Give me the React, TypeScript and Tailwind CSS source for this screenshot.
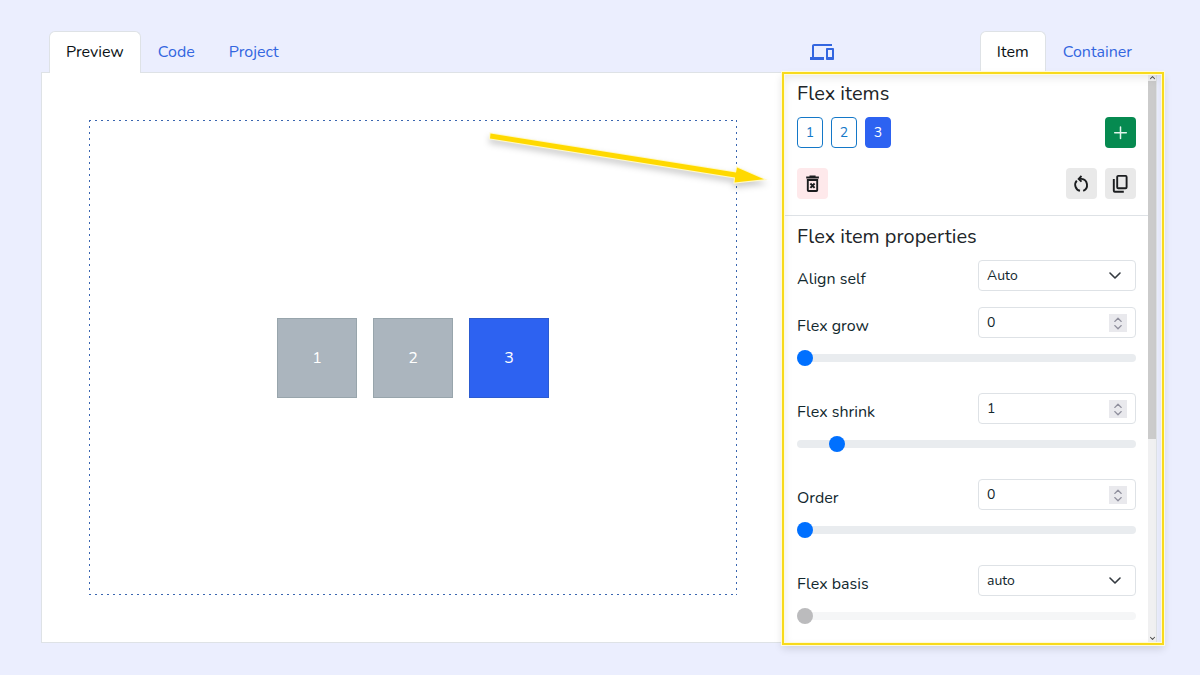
import { useId, useState } from 'react'
import type { ReactNode } from 'react'
import { MdDevices } from 'react-icons/md'
import clsx from 'clsx'

const items = [1, 2, 3]

function Tab({ label, active }: { label: string; active?: boolean }) {
  return (
    <a
      href="#"
      className={clsx(
        'block h-[42px] rounded-t-md border border-b-0 px-4 text-base leading-10',
        active ? 'border-[#dee2e6] bg-white text-[#0b1215]' : 'border-transparent text-[#3366e0]'
      )}
    >
      {label}
    </a>
  )
}

function Chevron({ className, up, stroke = 1.6 }: { className: string; up?: boolean; stroke?: number }) {
  return (
    <svg viewBox="0 0 12 8" className={className} fill="none" stroke="currentColor" strokeWidth={stroke} strokeLinecap="round" strokeLinejoin="round">
      <path d={up ? 'M1 7l5-5 5 5' : 'M1 1l5 5 5-5'} />
    </svg>
  )
}

function ActionIcon({ children }: { children: ReactNode }) {
  return (
    <svg viewBox="0 0 20 20" className="size-5" fill="none" stroke="currentColor" strokeWidth="1.9">
      {children}
    </svg>
  )
}

function SelectField({ label, options }: { label: string; options: string[] }) {
  const id = useId()
  return (
    <div className="flex items-end justify-between">
      <label htmlFor={id} className="leading-6">{label}</label>
      <div className="relative w-[158px]">
        <select id={id} className="block h-[31px] w-full appearance-none rounded border border-[#dee2e6] bg-white px-2 text-sm">
          {options.map((option) => (
            <option key={option}>{option}</option>
          ))}
        </select>
        <Chevron className="pointer-events-none absolute top-3 right-[15px] h-2 w-3 text-[#343a40]" />
      </div>
    </div>
  )
}

function Slider({ label, value, max, disabled, onChange }: { label: string; value: number; max: number; disabled?: boolean; onChange?: (value: number) => void }) {
  return (
    <input
      type="range"
      aria-label={label}
      min={0}
      max={max}
      value={value}
      disabled={disabled}
      onChange={(e) => onChange?.(Number(e.target.value))}
      className="mt-3 block h-4 w-full appearance-none bg-transparent [&::-webkit-slider-runnable-track]:h-2 [&::-webkit-slider-runnable-track]:rounded-full [&::-webkit-slider-runnable-track]:bg-[#e9ecef] [&::-webkit-slider-thumb]:-mt-1 [&::-webkit-slider-thumb]:size-4 [&::-webkit-slider-thumb]:appearance-none [&::-webkit-slider-thumb]:rounded-full [&::-webkit-slider-thumb]:bg-[#0070ff] disabled:[&::-webkit-slider-runnable-track]:bg-[#f5f6f7] disabled:[&::-webkit-slider-thumb]:bg-[#bbbbbd]"
    />
  )
}

function NumberField({ label, initial }: { label: string; initial: number }) {
  const id = useId()
  const [value, setValue] = useState(initial)

  return (
    <div className="mb-[27px]">
      <div className="flex items-end justify-between">
        <label htmlFor={id} className="leading-6">{label}</label>
        <div className="relative w-[158px]">
          <input
            id={id}
            type="number"
            value={value}
            onChange={(e) => setValue(Number(e.target.value))}
            className="block h-[31px] w-full rounded border border-[#dee2e6] bg-white px-2 text-sm [appearance:textfield] [&::-webkit-inner-spin-button]:appearance-none"
          />
          <span className="pointer-events-none absolute top-[7px] right-[9px] flex size-[18px] flex-col items-center justify-center gap-[3px] bg-[#e9e9ed] text-[#8f8f9d]">
            <Chevron up stroke={2.2} className="h-[5px] w-2" />
            <Chevron stroke={2.2} className="h-[5px] w-2" />
          </span>
        </div>
      </div>
      <Slider label={`${label} slider`} value={value} max={10} onChange={setValue} />
    </div>
  )
}

function Preview({ selected }: { selected: number }) {
  return (
    <section className="relative flex min-w-0 flex-1 border border-r-0 border-[#dee2e6] bg-white p-[47px]">
      {/* Sparse dotted outline: 2px dots every 6px along each edge */}
      <div className="flex flex-1 items-center justify-center gap-4 bg-[image:repeating-linear-gradient(90deg,#3a66b0_0_2px,transparent_2px_6px),repeating-linear-gradient(90deg,#3a66b0_0_2px,transparent_2px_6px),repeating-linear-gradient(180deg,#3a66b0_0_2px,transparent_2px_6px),repeating-linear-gradient(180deg,#3a66b0_0_2px,transparent_2px_6px)] [background-position:left_top,left_bottom,left_top,right_top] [background-size:100%_1px,100%_1px,1px_100%,1px_100%] bg-no-repeat">
        {items.map((n) => (
          <div
            key={n}
            className={clsx(
              'flex size-20 items-center justify-center border text-white',
              n === selected ? 'border-[#2c5bd0] bg-[#2d62f1]' : 'border-[#98a5ac] bg-[#abb5be]'
            )}
          >
            {n}
          </div>
        ))}
      </div>

      {/* Pointer to the settings panel */}
      <svg viewBox="0 0 300 80" className="pointer-events-none absolute top-[47px] right-1 h-20 w-[300px] drop-shadow-[0_4px_3px_rgba(0,0,0,0.2)]">
        <path
          d="M10.500 13.500L256 52.500L257 47.500L284 59.300L254.500 62.500L255 57.500L10 18.500Z"
          fill="#ffd900"
          stroke="#fff9c8"
          strokeWidth="2"
          paintOrder="stroke"
        />
      </svg>
    </section>
  )
}

function Settings({ selected, onSelect }: { selected: number; onSelect: (n: number) => void }) {
  return (
    <aside className="relative flex w-[373px] shrink-0 border border-[#dee2e6] bg-white">
      <div className="min-w-0 flex-1 overflow-hidden text-[#12282e]">
        <div className="border-b border-[#dee2e6] px-3 pt-2 pb-4">
          <h2 className="mb-[10px] text-xl leading-[26px] font-normal text-[#212529]">Flex items</h2>
          <div className="flex gap-2">
            {items.map((n) => (
              <button
                key={n}
                onClick={() => onSelect(n)}
                className={clsx(
                  'h-[31px] w-[26px] rounded border text-sm',
                  n === selected ? 'border-[#2d62f1] bg-[#2d62f1] text-white' : 'border-[#1478c8] bg-white text-[#1478c8]'
                )}
              >
                {n}
              </button>
            ))}
            <button aria-label="Add item" className="ml-auto flex size-[31px] items-center justify-center rounded bg-[#068a50] text-[#e4f5ec]">
              <svg viewBox="0 0 20 20" className="size-5" stroke="currentColor" strokeWidth="1.5" strokeLinecap="round">
                <path d="M9.500 4v11.500M3.700 9.700h11.600" />
              </svg>
            </button>
          </div>
          <div className="mt-5 flex gap-2 text-[#1b1d1f]">
            <button aria-label="Delete item" className="mr-auto flex size-[31px] items-center justify-center rounded bg-[#fee9eb]">
              <ActionIcon>
                <path d="M3.200 3.500H15.900M6.500 2.500H12.600" />
                <path d="M4.800 6H14.200V16.200a.8.8 0 0 1-.8.800H5.600a.8.8 0 0 1-.8-.8ZM7.400 9.500l4.200 4.300M11.600 9.500l-4.200 4.300" />
              </ActionIcon>
            </button>
            <button aria-label="Reset item" className="flex size-[31px] items-center justify-center rounded bg-[#e9e9e9]">
              <ActionIcon>
                <path d="M7.200 4.900h2.200A6.200 6.200 0 0 1 11.200 16.800M4.800 6.600A6.200 6.200 0 0 0 8 16.800" />
                <path d="M9.500 2L6.700 4.900l2.800 2.700" />
              </ActionIcon>
            </button>
            <button aria-label="Duplicate item" className="flex size-[31px] items-center justify-center rounded bg-[#e9e9e9]">
              <ActionIcon>
                <rect x="6.200" y="1.900" width="9.400" height="12.400" rx="1" />
                <path d="M2.800 5v11.700a1 1 0 0 0 1 1H12.800" />
              </ActionIcon>
            </button>
          </div>
        </div>

        <div className="px-3 pt-2">
          <h2 className="mb-[10px] text-xl leading-[26px] font-normal text-[#212529]">Flex item properties</h2>
          <div className="mb-4">
            <SelectField label="Align self" options={['Auto', 'Flex start', 'Flex end', 'Center', 'Baseline', 'Stretch']} />
          </div>
          <NumberField label="Flex grow" initial={0} />
          <NumberField label="Flex shrink" initial={1} />
          <NumberField label="Order" initial={0} />
          <SelectField label="Flex basis" options={['auto', 'px', '%', 'rem']} />
          <Slider label="Flex basis slider" value={0} max={100} disabled />
        </div>
      </div>

      {/* Scrollbar */}
      <div className="flex w-2 flex-col items-center bg-[#f0f0f1] pt-px text-[#505050]">
        <Chevron up stroke={2.5} className="my-px h-[5px] w-[5px]" />
        <div className="h-[63%] w-full bg-[#cbcbcb]" />
        <Chevron stroke={2.5} className="mt-auto mb-px h-[5px] w-[5px]" />
      </div>

      {/* Highlight frame */}
      <div className="pointer-events-none absolute -top-px -right-[8px] -bottom-[3px] -left-[3px] z-20 border-2 border-[#f8da1c] shadow-[0_0_0_1px_#fffbd8,0_4px_8px_rgba(0,0,0,0.12),inset_0_0_0_1px_#fffbd8,inset_0_4px_10px_rgba(0,0,0,0.09)]" />
    </aside>
  )
}

export default function App() {
  const [selected, setSelected] = useState(3)

  return (
    <main className="flex h-screen min-h-[675px] flex-col bg-[#ebeefe] pt-[31px] pr-[43px] pb-8 pl-[41px] font-['Nunito','Lato',sans-serif] text-base">
      <header className="relative z-10 -mb-px flex">
        <nav className="flex flex-1 items-start pl-2">
          <Tab label="Preview" active />
          <Tab label="Code" />
          <Tab label="Project" />
        </nav>
        <div className="flex w-[373px] shrink-0 items-start pr-2">
          <button aria-label="Toggle device preview" className="mt-[9px] ml-[26px] text-[#3366e0]">
            <MdDevices className="size-6" />
          </button>
          <nav className="ml-auto flex">
            <Tab label="Item" active />
            <Tab label="Container" />
          </nav>
        </div>
      </header>
      <div className="flex min-h-0 flex-1">
        <Preview selected={selected} />
        <Settings selected={selected} onSelect={setSelected} />
      </div>
    </main>
  )
}
